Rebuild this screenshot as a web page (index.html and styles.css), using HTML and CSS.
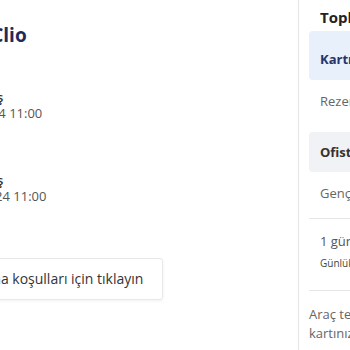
FILE: index.html
```html
<!DOCTYPE html>
<html lang="tr">
<head>
    <meta charset="UTF-8">
    <meta name="viewport" content="width=device-width, initial-scale=1.0">
    <title>Rezervasyon Özeti</title>
    <link rel="stylesheet" href="styles.css">
</head>
<body>
    <div class="page">
        <div class="main">
            <h2 class="car-title">Renault Clio</h2>

            <div class="trip trip-first">
                <div class="trip-office">Adana Karataş</div>
                <div class="trip-date">Çar, 12.06.2024 11:00</div>
            </div>

            <div class="trip">
                <div class="trip-office">Adana Karataş</div>
                <div class="trip-date">Cmt, 15.06.2024 11:00</div>
            </div>

            <button class="terms-btn">
                <svg class="terms-icon" width="16" height="16" viewBox="0 0 16 16" fill="none" stroke="#1f2a5c" stroke-width="1.4">
                    <path d="M4 1.5h5.5L13 5v9.5H4z"/>
                    <path d="M6.5 8h4M6.5 11h4"/>
                </svg>
                Kiralama koşulları için tıklayın
            </button>
        </div>

        <div class="summary">
            <div class="summary-title">Toplam Tutar</div>

            <div class="pay-option pay-card">Kartı ile öde</div>
            <div class="pay-note">Rezervasyon anında ödenir</div>

            <div class="pay-option pay-office">Ofiste öde</div>
            <div class="pay-note">Genç sürücü ücreti dahil</div>

            <div class="price-box">
                <div class="price-days">1 gün kiralama</div>
                <div class="price-daily">Günlük fiyat</div>
            </div>

            <p class="summary-text">Araç teslim sırasında kredi kartınız gereklidir.</p>
        </div>
    </div>
</body>
</html>
```

FILE: styles.css
```css
body {
    margin: 0;
    font-family: "Open Sans", sans-serif;
    background-color: #fff;
    overflow: hidden;
}
.page {
    display: flex;
    margin-left: -120px;
}
.main {
    flex: none;
    width: 386px;
    padding: 22px 0 0 32px;
}
.car-title {
    margin: 0;
    font-size: 19px;
    line-height: 26px;
    font-weight: 700;
    color: #1f2a5c;
}
.trip {
    margin-top: 41px;
}
.trip + .trip {
    margin-top: 51px;
}
.trip-office {
    font-size: 13px;
    line-height: 16px;
    font-weight: 600;
    color: #333;
}
.trip-date {
    font-size: 13px;
    line-height: 16px;
    color: #555;
}
.terms-btn {
    display: flex;
    align-items: center;
    gap: 8px;
    margin-top: 54px;
    padding: 10px 19px 10px 14px;
    border: 1px solid #e8e8e8;
    border-radius: 3px;
    background-color: #fff;
    box-shadow: 0 1px 3px rgba(0, 0, 0, 0.06);
    font-family: "Open Sans", sans-serif;
    font-size: 14px;
    line-height: 20px;
    color: #333;
}
.terms-icon {
    flex: none;
}
.summary {
    flex: none;
    width: 190px;
    min-height: 350px;
    padding: 7px 0 0 10px;
    border-left: 1px solid #e4e4e4;
}
.summary-title {
    padding: 0 11px;
    font-size: 15px;
    line-height: 20px;
    font-weight: 700;
    color: #222;
}
.pay-option {
    margin-top: 4px;
    padding: 0 11px;
    height: 49px;
    display: flex;
    align-items: center;
    border-radius: 4px;
    font-size: 13px;
    font-weight: 700;
}
.pay-card {
    padding-top: 6px;
    box-sizing: border-box;
    background-color: #e7f0fb;
    color: #27336b;
}
.pay-office {
    height: 40px;
    margin-top: 21px;
    background-color: #f1f2f5;
    color: #333;
}
.pay-note {
    padding: 0 11px;
    margin-top: 11px;
    font-size: 13px;
    line-height: 20px;
    color: #666;
}
.price-box {
    margin-top: 15px;
    padding: 12px 11px 19px;
    border-top: 1px solid #e6e6e6;
    border-bottom: 1px solid #e6e6e6;
}
.price-days {
    font-size: 13px;
    line-height: 20px;
    color: #555;
}
.price-daily {
    margin-top: 4px;
    font-size: 10px;
    line-height: 16px;
    color: #3d4a3d;
}
.summary-text {
    margin: 14px 0 0;
    font-size: 13px;
    line-height: 19px;
    color: #666;
}
```
